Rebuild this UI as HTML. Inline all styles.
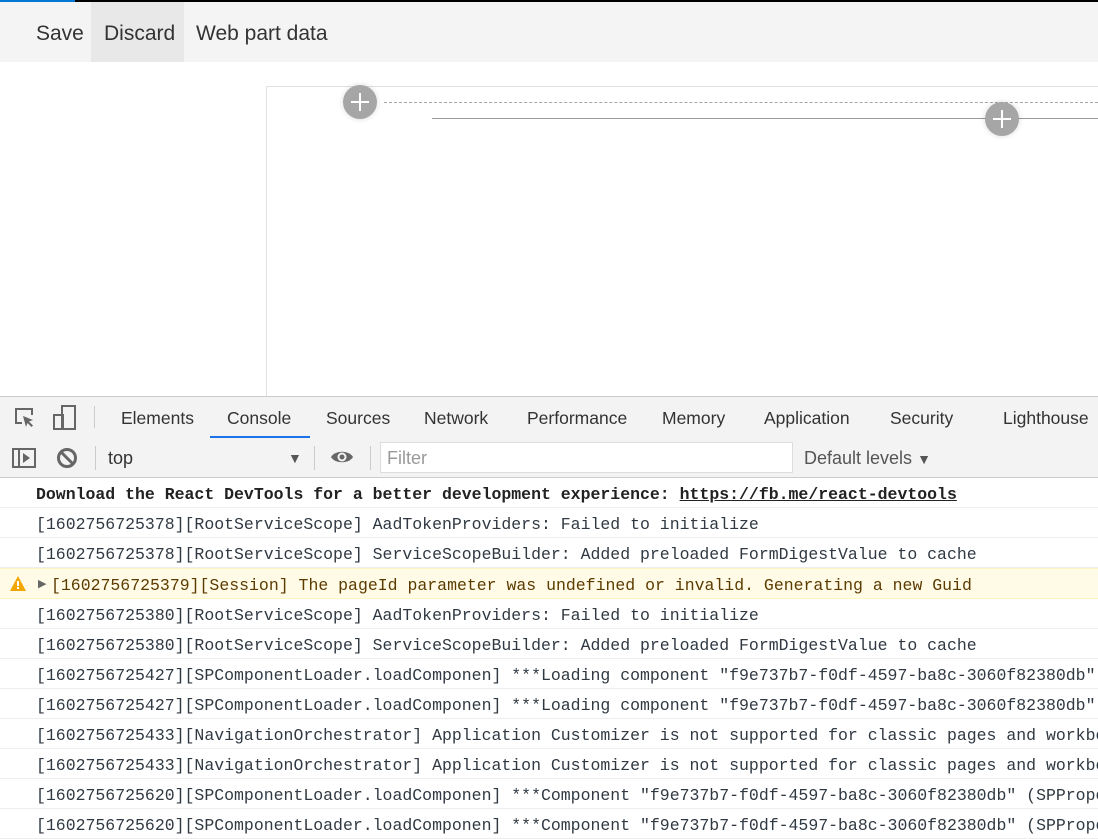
<!DOCTYPE html><html><head><style>
body{margin:0;width:1098px;height:837px;overflow:hidden;background:#fff;font-family:"Liberation Sans",sans-serif;position:relative}
.abs{position:absolute}
.tb{top:2px;left:0;width:1098px;height:60px;background:#f4f4f4}
.tb span{position:absolute;top:0;height:60px;line-height:64px;font-size:21px;color:#333}
.plus{width:34px;height:34px;border-radius:50%;background:#a6a6a6;box-shadow:0 0 6px rgba(0,0,0,.15)}
.plus:before{content:"";position:absolute;left:8px;top:16px;width:18px;height:2px;background:#fff}
.plus:after{content:"";position:absolute;left:16px;top:8px;width:2px;height:18px;background:#fff}
.tabs{top:396px;left:0;width:1098px;height:41px;background:#f3f3f3;border-top:1px solid #ccc;border-bottom:1px solid #ccc;overflow:hidden}
.tabs span{position:absolute;top:0;line-height:42px;font-size:17.5px;color:#333}
.bar2{top:438px;left:0;width:1098px;height:39px;background:#f3f3f3;border-bottom:1px solid #ccc}
.row{position:absolute;left:0;width:1098px;height:29px;border-bottom:1px solid #eee;font-family:"Liberation Mono",monospace;font-size:16.5px;line-height:33px;white-space:pre;color:#303942;overflow:hidden}
.row span{position:absolute;left:36px;top:0}
</style></head><body>
<div class="abs" style="top:0;left:0;width:1098px;height:2px;background:#000"></div>
<div class="abs" style="top:0;left:0;width:75px;height:2px;background:#0078d4"></div>
<div class="abs tb">
<span style="left:91px;width:93px;background:#e8e8e8"></span>
<span style="left:36px">Save</span>
<span style="left:104px">Discard</span>
<span style="left:196px">Web part data</span>
</div>
<div class="abs" style="left:266px;top:86px;width:832px;height:310px;border-left:1px solid #e1e1e1;border-top:1px solid #e1e1e1"></div>
<div class="abs" style="left:384px;top:102px;width:714px;border-top:1px dashed #a6a6a6"></div>
<div class="abs" style="left:432px;top:118px;width:666px;border-top:1px solid #999"></div>
<div class="abs plus" style="left:343px;top:85px"></div>
<div class="abs plus" style="left:985px;top:102px"></div>
<div class="abs tabs">
<svg class="abs" style="left:14px;top:10px" width="22" height="22" viewBox="0 0 22 22" fill="none" stroke="#666" stroke-width="2"><path d="M8 16H2V2h16v6"/><path d="M9 9l10 4-4 1.5 4 4-1.5 1.5-4-4L12 20z" fill="#666" stroke="none"/></svg>
<svg class="abs" style="left:53px;top:8px" width="24" height="26" viewBox="0 0 24 26" fill="none" stroke="#666" stroke-width="2"><rect x="9" y="1" width="13" height="23"/><rect x="1" y="10" width="9" height="14"/></svg>
<div class="abs" style="left:94px;top:9px;width:1px;height:22px;background:#ccc"></div>
<span style="left:121px">Elements</span>
<span style="left:227px">Console</span>
<div class="abs" style="left:210px;top:39px;width:100px;height:2px;background:#1a73e8"></div>
<span style="left:326px">Sources</span>
<span style="left:424px">Network</span>
<span style="left:527px">Performance</span>
<span style="left:662px">Memory</span>
<span style="left:764px">Application</span>
<span style="left:890px">Security</span>
<span style="left:1003px">Lighthouse</span>
</div>
<div class="abs bar2">
<svg class="abs" style="left:12px;top:10px" width="24" height="20" viewBox="0 0 24 20" fill="none" stroke="#666" stroke-width="2"><rect x="1" y="1" width="22" height="18"/><path d="M7 1v18"/><path d="M11 5l7 5-7 5z" fill="#666" stroke="none"/></svg>
<svg class="abs" style="left:56px;top:9px" width="22" height="22" viewBox="0 0 22 22" fill="none" stroke="#666" stroke-width="3"><circle cx="11" cy="11" r="8.5"/><path d="M5 5l12 12"/></svg>
<div class="abs" style="left:95px;top:8px;width:1px;height:24px;background:#ccc"></div>
<span class="abs" style="left:108px;top:0;line-height:41px;font-size:18px;color:#333">top</span>
<span class="abs" style="left:288px;top:0;line-height:41px;font-size:14px;color:#555">▼</span>
<div class="abs" style="left:314px;top:8px;width:1px;height:24px;background:#ccc"></div>
<svg class="abs" style="left:330px;top:11px" width="24" height="16" viewBox="0 0 24 16"><path d="M1 8C5 1 19 1 23 8C19 15 5 15 1 8z" fill="#666"/><circle cx="12" cy="8" r="4.5" fill="#f3f3f3"/><circle cx="12" cy="8" r="2.5" fill="#666"/></svg>
<div class="abs" style="left:370px;top:8px;width:1px;height:24px;background:#ccc"></div>
<div class="abs" style="left:380px;top:4px;width:411px;height:29px;background:#fff;border:1px solid #ddd"></div>
<span class="abs" style="left:387px;top:0;line-height:41px;font-size:18px;color:#999">Filter</span>
<span class="abs" style="left:804px;top:0;line-height:41px;font-size:18px;color:#555">Default levels <span style="font-size:14px">▼</span></span>
</div>
<div class="row" style="top:478px"><span style="font-weight:bold;color:#222">Download the React DevTools for a better development experience: <u>https://fb.me/react-devtools</u></span></div>
<div class="row" style="top:508px"><span>[1602756725378][RootServiceScope] AadTokenProviders: Failed to initialize</span></div>
<div class="row" style="top:538px"><span>[1602756725378][RootServiceScope] ServiceScopeBuilder: Added preloaded FormDigestValue to cache</span></div>
<div class="row" style="top:568px;background:#fffbe6;border-top:1px solid #fff5c2;border-bottom:1px solid #fff5c2;height:29px;color:#5c3b00">
<svg class="abs" style="left:10px;top:7px" width="16" height="15" viewBox="0 0 16 15"><path d="M8 0L16 15H0z" fill="#f2a600"/><path d="M7 5h2v5H7zM7 11h2v2H7z" fill="#fff"/></svg>
<span style="left:38px;font-size:11px;color:#666">▶</span>
<span style="left:51px">[1602756725379][Session] The pageId parameter was undefined or invalid. Generating a new Guid</span></div>
<div class="row" style="top:599px"><span>[1602756725380][RootServiceScope] AadTokenProviders: Failed to initialize</span></div>
<div class="row" style="top:629px"><span>[1602756725380][RootServiceScope] ServiceScopeBuilder: Added preloaded FormDigestValue to cache</span></div>
<div class="row" style="top:659px"><span>[1602756725427][SPComponentLoader.loadComponen] ***Loading component "f9e737b7-f0df-4597-ba8c-3060f82380db" (SPPropertyPane)</span></div>
<div class="row" style="top:689px"><span>[1602756725427][SPComponentLoader.loadComponen] ***Loading component "f9e737b7-f0df-4597-ba8c-3060f82380db" (SPPropertyPane)</span></div>
<div class="row" style="top:719px"><span>[1602756725433][NavigationOrchestrator] Application Customizer is not supported for classic pages and workbench</span></div>
<div class="row" style="top:749px"><span>[1602756725433][NavigationOrchestrator] Application Customizer is not supported for classic pages and workbench</span></div>
<div class="row" style="top:779px"><span>[1602756725620][SPComponentLoader.loadComponen] ***Component "f9e737b7-f0df-4597-ba8c-3060f82380db" (SPPropertyPane)</span></div>
<div class="row" style="top:809px"><span>[1602756725620][SPComponentLoader.loadComponen] ***Component "f9e737b7-f0df-4597-ba8c-3060f82380db" (SPPropertyPane)</span></div>
</body></html>
